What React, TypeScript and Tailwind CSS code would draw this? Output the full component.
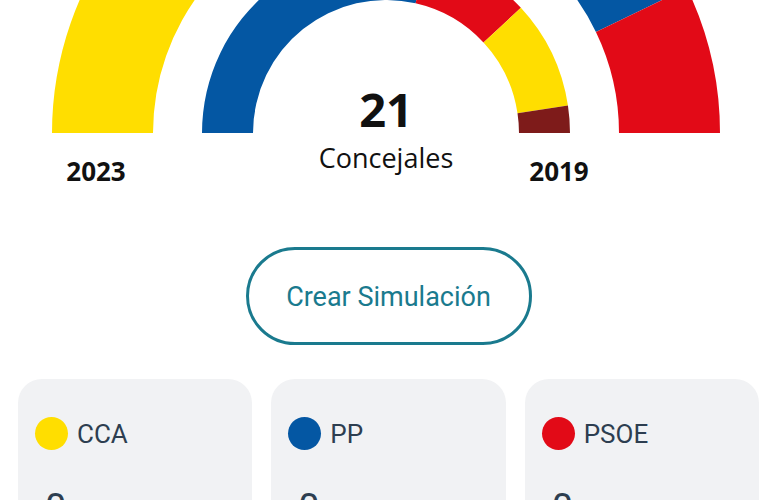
import React from "react";

const CX = 386;
const CY = 133;
const SEAT = 180 / 21;

type Seg = { color: string; seats: number };

// 2023 en el anillo exterior, 2019 en el interior
const ring2023: Seg[] = [
    { color: "#FFDE00", seats: 9 },
    { color: "#0457A3", seats: 9 },
    { color: "#E20A17", seats: 3 },
];

const ring2019: Seg[] = [
    { color: "#0457A3", seats: 12 },
    { color: "#E20A17", seats: 4 },
    { color: "#FFDE00", seats: 4 },
    { color: "#7E1B1A", seats: 1 },
];

const pt = (r: number, deg: number) => {
    const a = (deg * Math.PI) / 180;
    return `${(CX + r * Math.cos(a)).toFixed(2)} ${(CY - r * Math.sin(a)).toFixed(2)}`;
};

const sector = (r0: number, r1: number, a1: number, a2: number) =>
    `M ${pt(r1, a1)} A ${r1} ${r1} 0 0 1 ${pt(r1, a2)} L ${pt(r0, a2)} A ${r0} ${r0} 0 0 0 ${pt(r0, a1)} Z`;

const Ring = ({ segs, r0, r1 }: { segs: Seg[]; r0: number; r1: number }) => {
    let start = 180;
    return (
        <>
            {segs.map((s, i) => {
                const end = start - s.seats * SEAT;
                const d = sector(r0, r1, start, end);
                start = end;
                return <path key={i} d={d} fill={s.color} />;
            })}
        </>
    );
};

const parties = [
    { name: "CCA", color: "bg-[#FFDE00]", seats: 0 },
    { name: "PP", color: "bg-[#0457A3]", seats: 0 },
    { name: "PSOE", color: "bg-[#E20A17]", seats: 0 },
];

const App = () => {
    return (
        <div className="w-[777px] h-[500px] overflow-hidden bg-white">
            <svg width={777} height={200} viewBox="0 0 777 200" className="block">
                <Ring segs={ring2023} r0={233} r1={334} />
                <Ring segs={ring2019} r0={133} r1={184} />
                <g style={{ fontFamily: "'Open Sans', sans-serif" }} fill="#111">
                    <text x={386} y={127} textAnchor="middle" fontSize={47} fontWeight={700}>21</text>
                    <text x={386} y={168} textAnchor="middle" fontSize={27}>Concejales</text>
                    <text x={96} y={181} textAnchor="middle" fontSize={26} fontWeight={700}>2023</text>
                    <text x={559} y={181} textAnchor="middle" fontSize={26} fontWeight={700}>2019</text>
                </g>
            </svg>

            <div className="flex justify-center pt-[47px]">
                <button className="w-[286px] h-[98px] rounded-full border-[3px] border-[#1a7a8e] text-[27px] text-[#1a7a8e] font-['Roboto',sans-serif] bg-white pt-[3px]">
                    Crear Simulación
                </button>
            </div>

            <div className="grid grid-cols-3 gap-[19px] px-[18px] mt-[34px]">
                {parties.map((p) => (
                    <div key={p.name} className="bg-[#f1f2f4] rounded-[24px] h-[200px] pl-[17px] pt-[38px]">
                        <div className="flex items-center gap-[9px]">
                            <span className={`w-[33px] h-[33px] rounded-full ${p.color}`} />
                            <span className="text-[26px] text-[#2d3e50] font-['Roboto',sans-serif] leading-none">{p.name}</span>
                        </div>
                        <div className="mt-[39px] pl-[10px] text-[38px] leading-none text-[#2d3e50] font-['Roboto',sans-serif]">
                            {p.seats}
                        </div>
                    </div>
                ))}
            </div>
        </div>
    );
};

export default App;
